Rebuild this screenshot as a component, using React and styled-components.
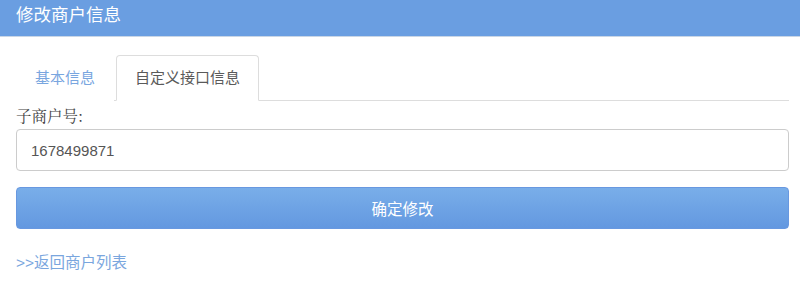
import React from 'react';
import styled, { createGlobalStyle } from "styled-components";

const Global = createGlobalStyle`
  html, body {
    margin: 0;
    padding: 0;
    background: #fff;
    font-family: "Liberation Sans", "Noto Sans CJK SC", sans-serif;
  }
`;

const App = () => {
  return (
    <Page>
      <Global />
      <Header>修改商户信息</Header>
      <Body>
        <Tabs>
          <Tab>基本信息</Tab>
          <Tab active>自定义接口信息</Tab>
        </Tabs>
        <Label>子商户号:</Label>
        <Input defaultValue="1678499871" />
        <Button>确定修改</Button>
        <BackLink href="#">&gt;&gt;返回商户列表</BackLink>
      </Body>
    </Page>
  )
}

export default App

const Page = styled.div`
  width: 800px;
  height: 289px;
  overflow: hidden;
`;

const Header = styled.div`
  height: 36px;
  line-height: 30px;
  padding: 0 16px;
  background: #6a9ee1;
  border-bottom: 1px solid #c9d6e6;
  color: #fff;
  font-size: 17.5px;
`;

const Body = styled.div`
  padding: 18px 11px 0 16px;
  display: flex;
  flex-direction: column;
`;

const Tabs = styled.div`
  display: flex;
  border-bottom: 1px solid #ddd;
  height: 46px;
  box-sizing: border-box;
`;

const Tab = styled.div`
  box-sizing: border-box;
  height: 46px;
  padding: 0 18px;
  margin-right: 2px;
  line-height: 44px;
  font-size: 15px;
  color: ${p => p.active ? "#5a5a5a" : "#79a6df"};
  background: #fff;
  border: 1px solid ${p => p.active ? "#ddd" : "transparent"};
  border-bottom-color: ${p => p.active ? "#fff" : "transparent"};
  border-radius: 4px 4px 0 0;
  margin-bottom: -1px;
`;

const Label = styled.div`
  margin-top: 2px;
  font-size: 15.5px;
  color: #444;
  line-height: 24px;
  font-family: "Noto Serif CJK SC", "Noto Sans CJK SC", serif;
`;

const Input = styled.input`
  margin-top: 2px;
  box-sizing: border-box;
  height: 42px;
  padding: 0 14px;
  border: 1px solid #ccc;
  border-radius: 4px;
  font-size: 15px;
  color: #555;
  font-family: "Liberation Sans", sans-serif;
  outline: none;
`;

const Button = styled.button`
  margin-top: 16px;
  height: 42px;
  border: 1px solid #6898e0;
  border-radius: 4px;
  background: linear-gradient(to bottom, #79aee9, #6398e0);
  color: #fff;
  font-size: 15.5px;
  font-family: "Noto Sans CJK SC", sans-serif;
`;

const BackLink = styled.a`
  margin-top: 21px;
  font-size: 15.5px;
  color: #7aa6de;
  text-decoration: none;
  align-self: flex-start;
`;
